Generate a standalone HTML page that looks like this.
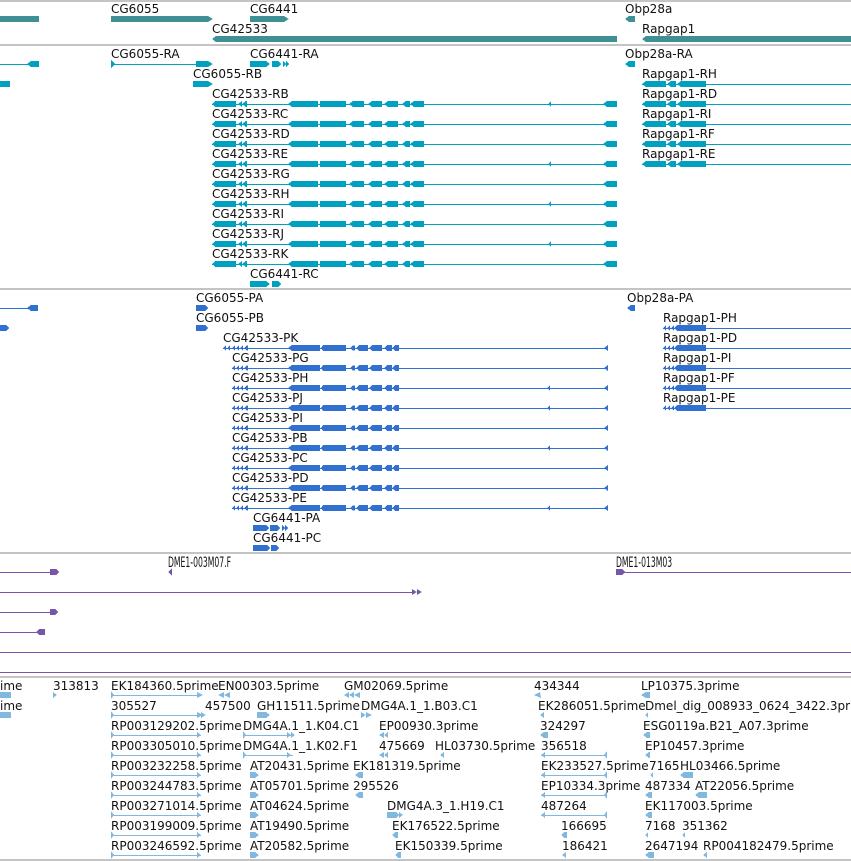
<!DOCTYPE html>
<html><head><meta charset="utf-8"><style>
html,body{margin:0;padding:0;background:#fff;width:851px;height:861px;overflow:hidden}
svg text{font-family:"DejaVu Sans","Liberation Sans",sans-serif;font-size:12px;fill:#111}
svg text.dme{font-size:14px}
</style></head><body>
<svg width="851" height="861" xmlns="http://www.w3.org/2000/svg" shape-rendering="crispEdges">
<defs>
<g id="tx" fill="#00a0c0">
 <rect x="212" y="104" width="405" height="1"/>
 <polygon points="212,104 215,101 236,101 236,107 215,107"/>
 <polygon points="238,104 242,101 242,107"/><polygon points="242,104 246,101 247,101 247,107 246,107"/>
 <polygon points="288,104 292,101 318,101 318,107 292,107"/>
 <rect x="320" y="101" width="26" height="6"/>
 <polygon points="349,104 353,101 364,101 364,107 353,107"/>
 <polygon points="368,104 372,101 382,101 382,107 372,107"/>
 <polygon points="384,104 388,101 398,101 398,107 388,107"/>
 <polygon points="402,104 406,101 410,101 410,107 406,107"/>
 <polygon points="410,104 414,101 424,101 424,107 414,107"/>
 <polygon points="603,104 607,101 617,101 617,107 607,107"/>
</g>
<polygon id="tick1" points="548,104 551,101.5 551,106.5" fill="#00a0c0"/>
<g id="rap" fill="#00a0c0">
 <rect x="642" y="104" width="209" height="1"/>
 <polygon points="642,104 646,101 666,101 666,107 646,107"/>
 <polygon points="667,104 671,101 676,101 676,107 671,107"/>
 <polygon points="677,104 681,101 706,101 706,107 681,107"/>
</g>
<g id="pr" fill="#3070d0">
 <rect x="232" y="348" width="376" height="1"/>
 <polygon points="232,348 235,345.5 235,350.5"/><polygon points="236,348 239,345.5 239,350.5"/><polygon points="240,348 243,345.5 243,350.5"/><polygon points="244,348 247,345.5 248,345.5 248,350.5 247,350.5"/>
 <polygon points="288,348 292,345 320,345 320,351 292,351"/>
 <polygon points="321,348 323,345 346,345 346,351 323,351"/>
 <polygon points="350,348 353,345.5 355,345.5 355,350.5 353,350.5"/>
 <polygon points="356,348 359,345 368,345 368,351 359,351"/>
 <polygon points="369,348 372,345 382,345 382,351 372,351"/>
 <polygon points="384,348 387,345 392,345 392,351 387,351"/>
 <polygon points="392,348 395,345 399,345 399,351 395,351"/>
 <polygon points="604,348 608,345 608,351"/>
</g>
<polygon id="tick2" points="547,348 550,345.5 550,350.5" fill="#3070d0"/>
<g id="rapp" fill="#3070d0">
 <rect x="663" y="328" width="188" height="1"/>
 <polygon points="663,328 666,325.5 666,330.5"/><polygon points="667,328 670,325.5 670,330.5"/><polygon points="671,328 674,325.5 674,330.5"/>
 <polygon points="674,328 677,325 706,325 706,331 677,331"/>
</g>
</defs>

<g fill="#c4c4c4">
<rect x="0" y="0" width="851" height="2"/>
<rect x="0" y="44" width="851" height="2"/>
<rect x="0" y="288" width="851" height="2"/>
<rect x="0" y="552" width="851" height="2"/>
<rect x="0" y="676" width="851" height="2"/>
<rect x="0" y="859" width="851" height="2"/>
</g>

<g fill="#3f9094">
<rect x="0" y="16" width="39" height="6"/>
<polygon points="111,16 208,16 213,19 208,22 111,22"/>
<polygon points="250,16 284,16 289,19 284,22 250,22"/>
<polygon points="625,19 629,16 635,16 635,22 629,22"/>
<polygon points="212,39 216,36 617,36 617,42 216,42"/>
<polygon points="642,39 646,36 851,36 851,42 646,42"/>
</g>
<text x="111" y="13">CG6055</text>
<text x="250" y="13">CG6441</text>
<text x="625" y="13">Obp28a</text>
<text x="212" y="33">CG42533</text>
<text x="642" y="33">Rapgap1</text>

<g fill="#00a0c0">
<rect x="0" y="64" width="30" height="1"/>
<polygon points="27,64 31,61 39,61 39,67 31,67"/>
<rect x="111" y="64" width="90" height="1"/>
<polygon points="111,60 115,64 111,68"/>
<polygon points="196,61 208,61 213,64 208,67 196,67"/>
<polygon points="250,61 266,61 270,64 266,67 250,67"/>
<polygon points="272,61 278,61 281,64 278,67 272,67"/>
<polygon points="283,61 286,64 283,67"/><polygon points="286,61 289,64 286,67"/>
<polygon points="625,64 629,61 635,61 635,67 629,67"/>
<polygon points="0,81 10,81 10,87 0,87"/>
<polygon points="193,81 208,81 213,84 208,87 193,87"/>
<polygon points="250,281 266,281 270,284 266,287 250,287"/>
<polygon points="272,281 278,281 281,284 278,287 272,287"/>
</g>
<text x="111" y="58">CG6055-RA</text>
<text x="250" y="58">CG6441-RA</text>
<text x="625" y="58">Obp28a-RA</text>
<text x="193" y="78">CG6055-RB</text>
<text x="642" y="78">Rapgap1-RH</text>
<use href="#rap" y="-20"/>
<use href="#rap" y="0"/><use href="#rap" y="20"/><use href="#rap" y="40"/><use href="#rap" y="60"/>
<text x="642" y="98">Rapgap1-RD</text>
<text x="642" y="118">Rapgap1-RI</text>
<text x="642" y="138">Rapgap1-RF</text>
<text x="642" y="158">Rapgap1-RE</text>
<use href="#tx" y="0"/><use href="#tx" y="20"/><use href="#tx" y="40"/><use href="#tx" y="60"/><use href="#tx" y="80"/><use href="#tx" y="100"/><use href="#tx" y="120"/><use href="#tx" y="140"/><use href="#tx" y="160"/>
<use href="#tick1" y="0"/><use href="#tick1" y="60"/><use href="#tick1" y="100"/><use href="#tick1" y="140"/>
<text x="212" y="98">CG42533-RB</text>
<text x="212" y="118">CG42533-RC</text>
<text x="212" y="138">CG42533-RD</text>
<text x="212" y="158">CG42533-RE</text>
<text x="212" y="178">CG42533-RG</text>
<text x="212" y="198">CG42533-RH</text>
<text x="212" y="218">CG42533-RI</text>
<text x="212" y="238">CG42533-RJ</text>
<text x="212" y="258">CG42533-RK</text>
<text x="250" y="278">CG6441-RC</text>

<g fill="#3070d0">
<rect x="0" y="308" width="30" height="1"/>
<polygon points="27,308 31,305 38,305 38,311 31,311"/>
<rect x="196" y="305" width="9" height="6"/><polygon points="205,305 208,308 205,311"/>
<rect x="196" y="325" width="9" height="6"/><polygon points="205,325 208,328 205,331"/>
<rect x="0" y="325" width="6" height="6"/><polygon points="6,325 9,328 6,331"/>
<polygon points="627,308 631,305 635,305 635,311 631,311"/>
<polygon points="253,525 266,525 269,528 266,531 253,531"/>
<polygon points="270,525 277,525 280,528 277,531 270,531"/>
<polygon points="282,525 285,528 282,531"/><polygon points="285,525 288,528 285,531"/>
<polygon points="253,545 267,545 270,548 267,551 253,551"/>
<polygon points="271,545 276,545 279,548 276,551 271,551"/>
<rect x="223" y="348" width="10" height="1"/>
<polygon points="223,348 226,345.5 226,350.5"/><polygon points="227,348 230,345.5 230,350.5"/>
</g>
<text x="196" y="302">CG6055-PA</text>
<text x="196" y="322">CG6055-PB</text>
<text x="627" y="302">Obp28a-PA</text>
<use href="#pr" y="0"/>
<use href="#pr" y="20"/><use href="#pr" y="40"/><use href="#pr" y="60"/><use href="#pr" y="80"/><use href="#pr" y="100"/><use href="#pr" y="120"/><use href="#pr" y="140"/><use href="#pr" y="160"/>
<use href="#tick2" y="40"/><use href="#tick2" y="60"/><use href="#tick2" y="100"/><use href="#tick2" y="160"/>
<use href="#rapp" y="0"/><use href="#rapp" y="20"/><use href="#rapp" y="40"/><use href="#rapp" y="60"/><use href="#rapp" y="80"/>
<text x="223" y="342">CG42533-PK</text>
<text x="232" y="362">CG42533-PG</text>
<text x="232" y="382">CG42533-PH</text>
<text x="232" y="402">CG42533-PJ</text>
<text x="232" y="422">CG42533-PI</text>
<text x="232" y="442">CG42533-PB</text>
<text x="232" y="462">CG42533-PC</text>
<text x="232" y="482">CG42533-PD</text>
<text x="232" y="502">CG42533-PE</text>
<text x="663" y="322">Rapgap1-PH</text>
<text x="663" y="342">Rapgap1-PD</text>
<text x="663" y="362">Rapgap1-PI</text>
<text x="663" y="382">Rapgap1-PF</text>
<text x="663" y="402">Rapgap1-PE</text>
<text x="253" y="522">CG6441-PA</text>
<text x="253" y="542">CG6441-PC</text>

<g fill="#7755aa">
<rect x="0" y="572" width="52" height="1"/><polygon points="50,569 56,569 59,572 56,575 50,575"/>
<polygon points="168,572 172,568.5 172,575.5"/>
<polygon points="616,569 622,569 625,572 622,575 616,575"/><rect x="616" y="572" width="235" height="1"/>
<rect x="0" y="592" width="414" height="1"/><polygon points="412,589 417,592 412,595"/><polygon points="417,589 422,592 417,595"/>
<rect x="0" y="612" width="52" height="1"/><polygon points="50,609 55,609 58,612 55,615 50,615"/>
<rect x="0" y="632" width="40" height="1"/><polygon points="36,632 39,629 45,629 45,635 39,635"/>
<rect x="0" y="652" width="851" height="1"/>
<rect x="0" y="672" width="851" height="1"/>
</g>
<text class="dme" transform="translate(168,567) scale(0.55,1)">DME1-003M07.F</text>
<text class="dme" transform="translate(616,567) scale(0.55,1)">DME1-013M03</text>

<g fill="#80b8e0">
<rect x="0" y="692" width="11" height="6"/><polygon points="53,692 57,695 53,698"/>
<rect x="111" y="695" width="90" height="1"/><polygon points="111,691 114,695 111,699"/><polygon points="197,692 203,695 197,698"/>
<polygon points="218,695 224,692 224,698"/><polygon points="224,695 230,692 230,698"/>
<polygon points="344,695 349,692 349,698"/><polygon points="349,695 354,692 354,698"/><polygon points="354,695 360,692 360,698"/>
<polygon points="534,695 540,692 541,698"/><polygon points="641,695 646,692 650,692 650,698 646,698"/>
<rect x="0" y="712" width="11" height="6"/>
<rect x="111" y="715" width="90" height="1"/><polygon points="111,711 114,715 111,719"/><polygon points="197,712 203,715 197,718"/><polygon points="201,712 206,715 201,718"/>
<polygon points="257,712 266,712 270,715 266,718 257,718"/><polygon points="361,712 366,715 361,718"/><polygon points="366,712 372,715 366,718"/>
<polygon points="540,715 544,712 544,718"/><polygon points="645,715 648,712 648,718"/>
<rect x="111" y="735" width="90" height="1"/><polygon points="111,731 114,735 111,739"/><polygon points="197,732 201,735 197,738"/>
<rect x="243" y="735" width="50" height="1"/><polygon points="243,731 246,735 243,739"/><polygon points="287,732 291,735 287,738"/><polygon points="291,732 295,735 291,738"/>
<polygon points="379,735 384,732 384,738"/><polygon points="384,735 388,732 388,738"/>
<polygon points="540,735 544,732 548,732 548,738 544,738"/><polygon points="643,735 647,732 650,732 650,738 647,738"/>
<rect x="111" y="755" width="90" height="1"/><polygon points="111,751 114,755 111,759"/><polygon points="197,752 201,755 197,758"/>
<rect x="243" y="755" width="50" height="1"/><polygon points="243,751 246,755 243,759"/><polygon points="287,752 291,755 287,758"/>
<polygon points="379,755 384,752 384,758"/><polygon points="384,755 388,752 388,758"/><polygon points="440,755 444,752 444,758"/>
<rect x="541" y="755" width="66" height="1"/><polygon points="541,755 545,752 545,758"/><polygon points="607,751 604,755 607,759"/>
<polygon points="645,755 649,752 650,752 650,758 649,758"/>
<rect x="111" y="775" width="90" height="1"/><polygon points="111,771 114,775 111,779"/><polygon points="197,772 201,775 197,778"/>
<polygon points="250,772 255,772 259,775 255,778 250,778"/><polygon points="355,775 359,772 363,772 363,778 359,778"/>
<rect x="541" y="775" width="66" height="1"/><polygon points="541,775 545,772 545,778"/><polygon points="607,771 604,775 607,779"/>
<polygon points="650,775 653,772 653,778"/><polygon points="680,775 684,772 693,772 693,778 684,778"/>
<rect x="111" y="795" width="90" height="1"/><polygon points="111,791 114,795 111,799"/><polygon points="197,792 201,795 197,798"/>
<polygon points="250,792 255,792 259,795 255,798 250,798"/><polygon points="355,795 359,792 363,792 363,798 359,798"/>
<rect x="541" y="795" width="66" height="1"/><polygon points="541,795 545,792 545,798"/><polygon points="607,791 604,795 607,799"/>
<polygon points="645,795 649,792 652,792 652,798 649,798"/><polygon points="695,795 699,792 707,792 707,798 699,798"/>
<rect x="111" y="815" width="90" height="1"/><polygon points="111,811 114,815 111,819"/><polygon points="197,812 201,815 197,818"/>
<polygon points="250,812 255,812 259,815 255,818 250,818"/><polygon points="387,812 396,812 399,815 396,818 387,818"/><polygon points="399,812 403,815 399,818"/>
<rect x="541" y="815" width="66" height="1"/><polygon points="541,815 545,812 545,818"/><polygon points="607,811 604,815 607,819"/>
<polygon points="645,815 649,812 652,812 652,818 649,818"/>
<rect x="111" y="835" width="90" height="1"/><polygon points="111,831 114,835 111,839"/><polygon points="197,832 201,835 197,838"/>
<polygon points="250,832 255,832 259,835 255,838 250,838"/><polygon points="392,835 395,832 398,832 398,838 395,838"/>
<polygon points="561,835 564,832 567,832 567,838 564,838"/><polygon points="645,835 648,832 648,838"/><polygon points="682,835 685,832 685,838"/>
<rect x="111" y="855" width="90" height="1"/><polygon points="111,851 114,855 111,859"/><polygon points="197,852 201,855 197,858"/>
<polygon points="250,852 255,852 259,855 255,858 250,858"/><polygon points="395,855 398,852 401,852 401,858 398,858"/>
<polygon points="562,855 566,852 566,858"/><polygon points="645,855 649,852 654,852 654,858 649,858"/><polygon points="703,855 707,852 707,858"/>
</g>
<text x="0" y="690">ime</text><text x="53" y="690">313813</text><text x="111" y="690">EK184360.5prime</text><text x="218" y="690">EN00303.5prime</text><text x="344" y="690">GM02069.5prime</text><text x="534" y="690">434344</text><text x="641" y="690">LP10375.3prime</text>
<text x="0" y="710">ime</text><text x="111" y="710">305527</text><text x="205" y="710">457500</text><text x="257" y="710">GH11511.5prime</text><text x="361" y="710">DMG4A.1_1.B03.C1</text><text x="538" y="710">EK286051.5prime</text><text x="645" y="710">Dmel_dig_008933_0624_3422.3prime</text>
<text x="111" y="730">RP003129202.5prime</text><text x="243" y="730">DMG4A.1_1.K04.C1</text><text x="379" y="730">EP00930.3prime</text><text x="540" y="730">324297</text><text x="643" y="730">ESG0119a.B21_A07.3prime</text>
<text x="111" y="750">RP003305010.5prime</text><text x="243" y="750">DMG4A.1_1.K02.F1</text><text x="379" y="750">475669</text><text x="435" y="750">HL03730.5prime</text><text x="541" y="750">356518</text><text x="645" y="750">EP10457.3prime</text>
<text x="111" y="770">RP003232258.5prime</text><text x="250" y="770">AT20431.5prime</text><text x="353" y="770">EK181319.5prime</text><text x="541" y="770">EK233527.5prime</text><text x="649" y="770">7165</text><text x="680" y="770">HL03466.5prime</text>
<text x="111" y="790">RP003244783.5prime</text><text x="250" y="790">AT05701.5prime</text><text x="353" y="790">295526</text><text x="541" y="790">EP10334.3prime</text><text x="645" y="790">487334</text><text x="695" y="790">AT22056.5prime</text>
<text x="111" y="810">RP003271014.5prime</text><text x="250" y="810">AT04624.5prime</text><text x="387" y="810">DMG4A.3_1.H19.C1</text><text x="541" y="810">487264</text><text x="645" y="810">EK117003.5prime</text>
<text x="111" y="830">RP003199009.5prime</text><text x="250" y="830">AT19490.5prime</text><text x="392" y="830">EK176522.5prime</text><text x="561" y="830">166695</text><text x="645" y="830">7168</text><text x="682" y="830">351362</text>
<text x="111" y="850">RP003246592.5prime</text><text x="250" y="850">AT20582.5prime</text><text x="395" y="850">EK150339.5prime</text><text x="562" y="850">186421</text><text x="645" y="850">2647194</text><text x="703" y="850">RP004182479.5prime</text>
</svg>
</body></html>
